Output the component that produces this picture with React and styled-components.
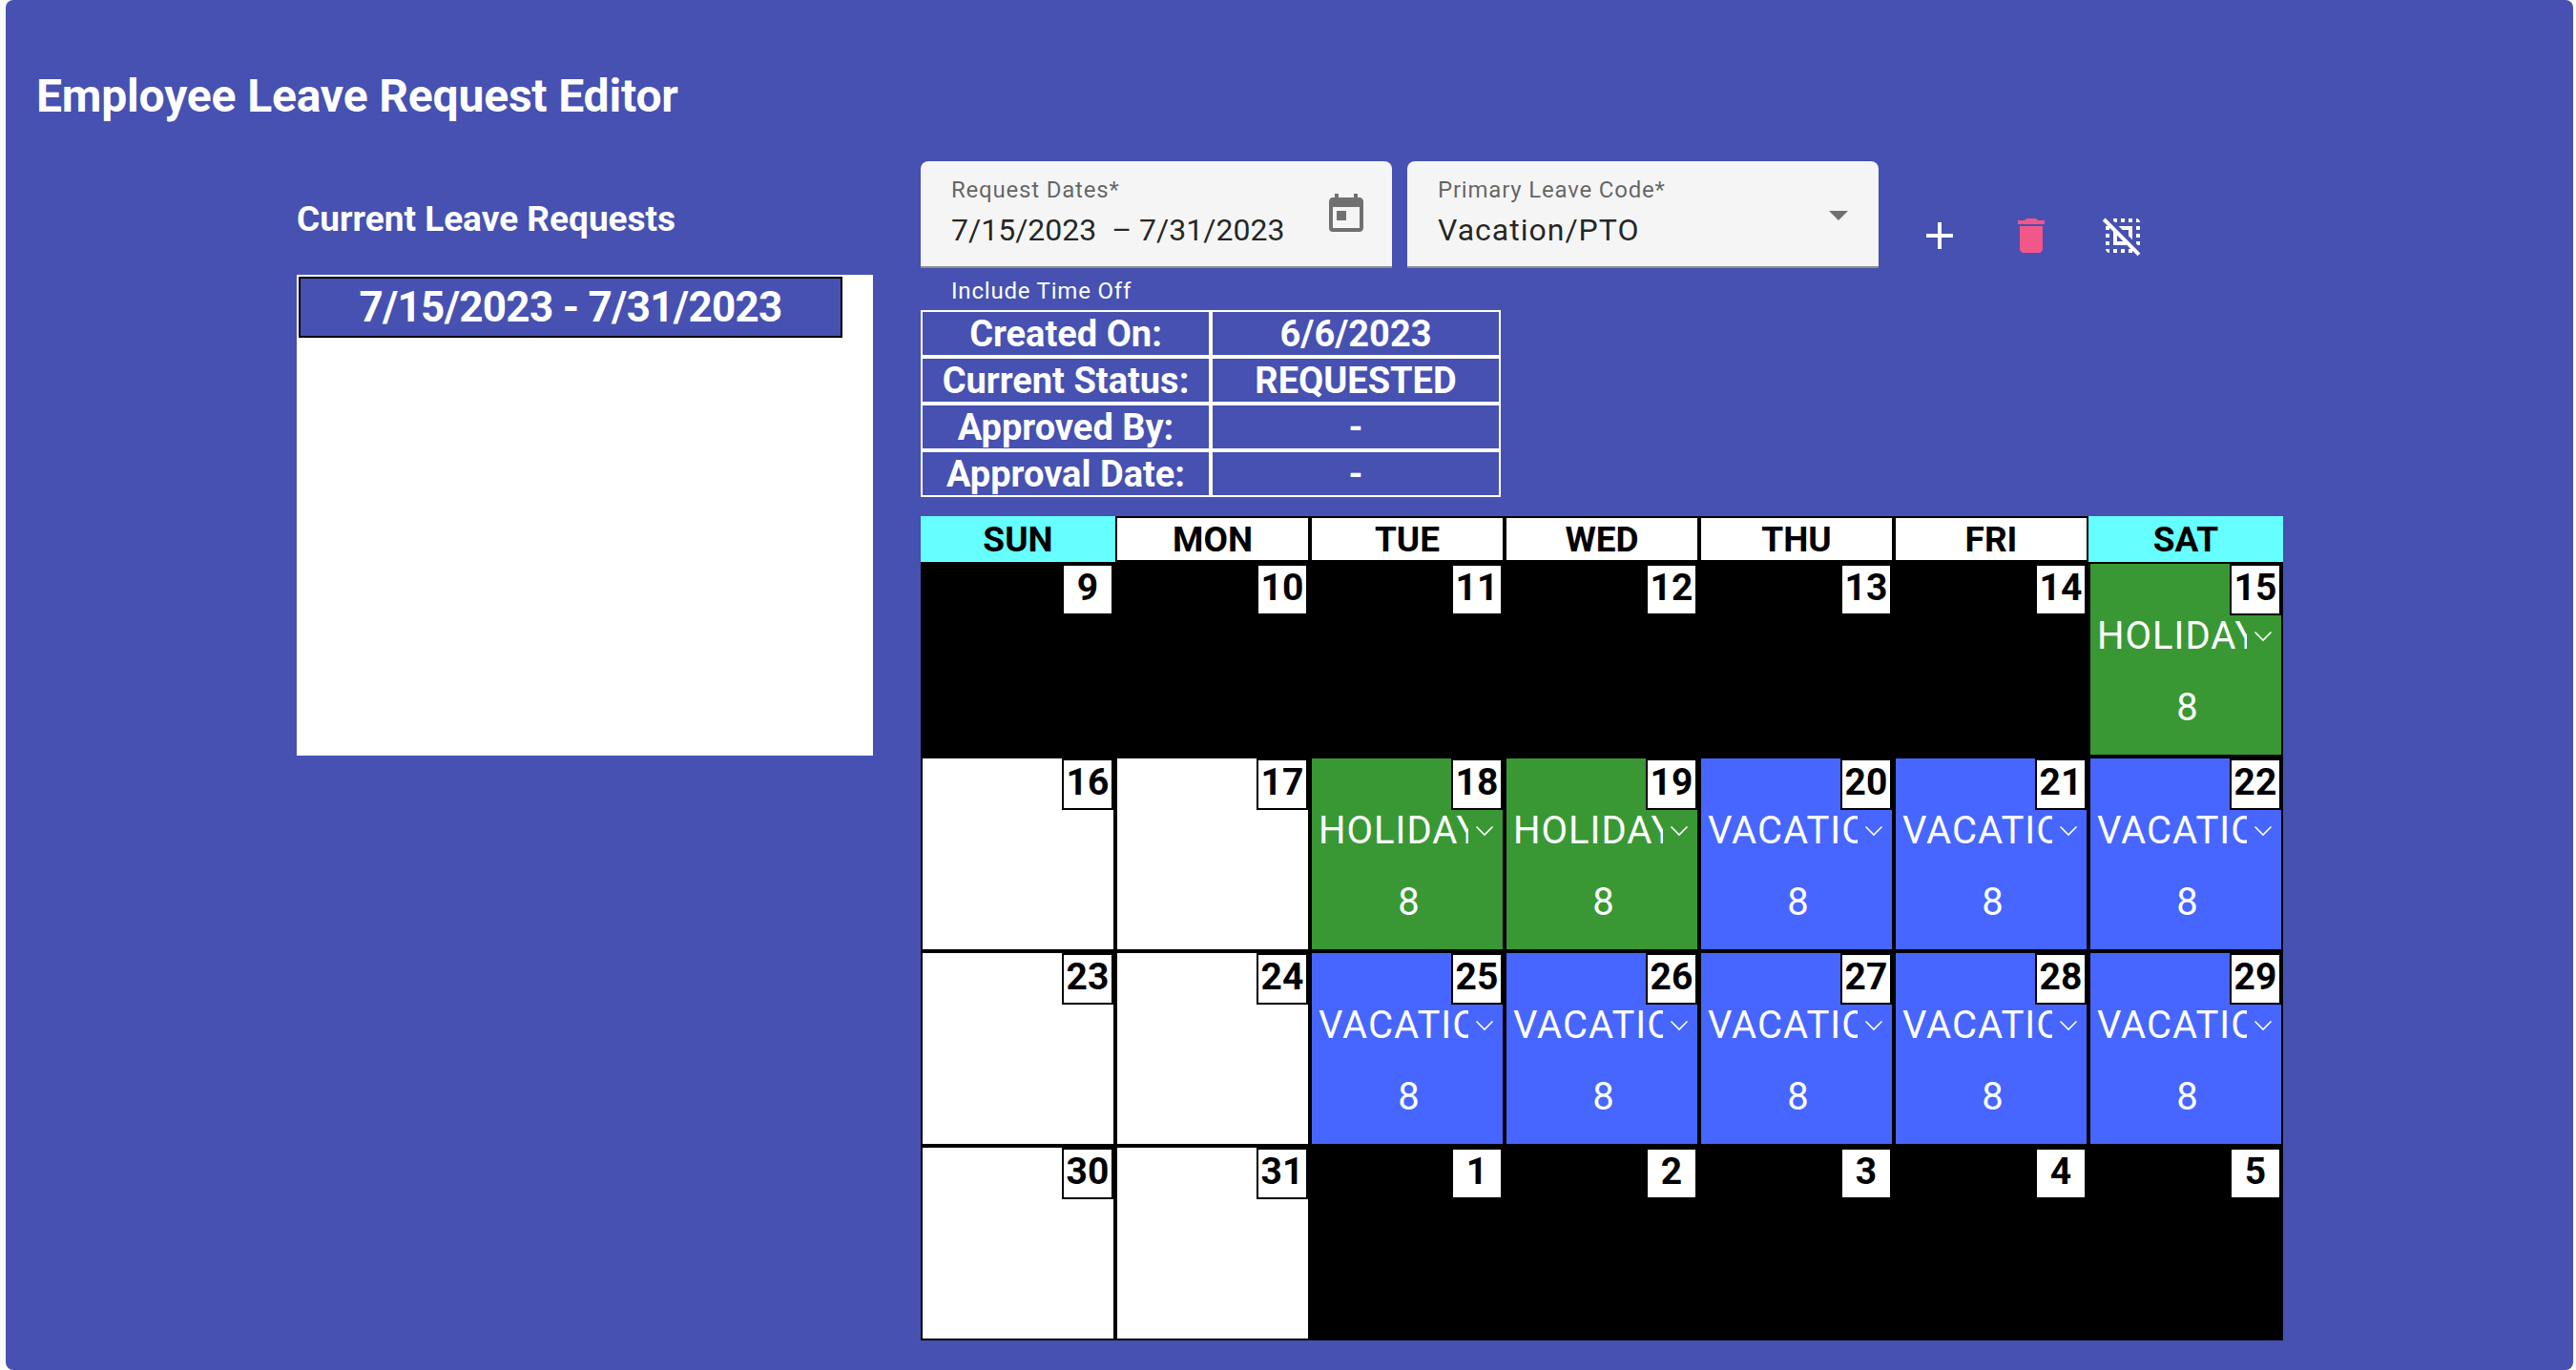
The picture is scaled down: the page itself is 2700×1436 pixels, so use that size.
import styled, { createGlobalStyle } from "styled-components";
import { MdAdd, MdArrowDropDown, MdDelete, MdDeselect, MdToday } from "react-icons/md";

const INDIGO = "#4651b1";
const CELL_COLORS = {
  off: "#000000",
  open: "#ffffff",
  holiday: "#399834",
  vacation: "#4666ff",
};

const GlobalStyle = createGlobalStyle`
  html, body {
    margin: 0;
    padding: 0;
    background: #fafafa;
  }
  body {
    font-family: Roboto, "Liberation Sans", sans-serif;
  }
`;

const Page = styled.div`
  height: 1436px;
  padding: 0 3px 0 6px;
  box-sizing: border-box;
  overflow: hidden;
`;

const Panel = styled.main`
  height: 100%;
  box-sizing: border-box;
  padding: 72px 0 0 32px;
  background: ${INDIGO};
  border-radius: 8px;
  color: #fff;
`;

const Title = styled.h1`
  margin: 0;
  font-size: 48px;
  line-height: 57px;
  font-weight: 700;
  letter-spacing: -0.17px;
`;

const Content = styled.div`
  display: flex;
  gap: 50px;
  margin-top: 40px;
  padding-left: 273px;
`;

const LeftColumn = styled.section`
  width: 604px;
  flex: none;
`;

const Subtitle = styled.h2`
  margin: 39px 0 0;
  font-size: 37px;
  line-height: 43px;
  font-weight: 700;
`;

const RequestList = styled.div`
  margin-top: 37px;
  height: 504px;
  padding: 2px;
  box-sizing: border-box;
  background: #fff;
`;

const RequestItem = styled.div`
  width: 570px;
  height: 64px;
  box-sizing: border-box;
  border: 2px solid #000;
  background: ${INDIGO};
  font-size: 44px;
  line-height: 60px;
  font-weight: 700;
  letter-spacing: -0.7px;
  text-align: center;
`;

const RightColumn = styled.section`
  width: 1428px;
  flex: none;
`;

const FormRow = styled.div`
  display: flex;
  gap: 16px;
  height: 112px;
`;

const Field = styled.div`
  position: relative;
  width: 494px;
  height: 112px;
  box-sizing: border-box;
  padding: 16px 32px 0;
  background: #f5f5f5;
  border-bottom: 2px solid #8c8c8c;
  border-radius: 8px 8px 0 0;
`;

const FieldLabel = styled.div`
  font-size: 24px;
  line-height: 28px;
  letter-spacing: 0.8px;
  color: rgba(0, 0, 0, 0.6);
`;

const FieldValue = styled.div`
  margin-top: 9px;
  font-size: 32px;
  line-height: 38px;
  letter-spacing: ${(p) => p.$spacing}px;
  color: rgba(0, 0, 0, 0.87);
  white-space: pre;
`;

const FieldIcon = styled.span`
  position: absolute;
  top: 32px;
  right: ${(p) => p.$right}px;
  display: flex;
  color: #707070;
`;

const ActionGroup = styled.div`
  display: flex;
  margin-top: 30px;
`;

const ActionButton = styled.button`
  width: 96px;
  height: 96px;
  padding: 0;
  border: 0;
  background: none;
  display: flex;
  align-items: center;
  justify-content: center;
  color: ${(p) => p.$color || "#fff"};
`;

const HelperText = styled.div`
  margin: 5px 0 0 32px;
  font-size: 24px;
  line-height: 39px;
  letter-spacing: 0.8px;
`;

const InfoTable = styled.div`
  display: grid;
  grid-template-columns: 304px 304px;
  grid-auto-rows: 49px;
  width: 608px;
`;

const InfoCell = styled.div`
  border: 2px solid #fff;
  font-size: 38px;
  line-height: 47px;
  font-weight: 700;
  text-align: center;
  white-space: nowrap;
`;

const Calendar = styled.div`
  display: grid;
  grid-template-columns: repeat(7, 204px);
  grid-template-rows: 48px repeat(4, 204px);
  margin-top: 20px;
`;

const DayHeader = styled.div`
  box-sizing: border-box;
  border: 2px solid ${(p) => (p.$weekend ? "#66ffff" : "#000")};
  background: ${(p) => (p.$weekend ? "#66ffff" : "#fff")};
  color: #000;
  font-size: 37px;
  line-height: 45px;
  font-weight: 700;
  text-align: center;
`;

const Cell = styled.div`
  display: flex;
  flex-direction: column;
  box-sizing: border-box;
  border: 2px solid #000;
  background: ${(p) => CELL_COLORS[p.$kind]};
  color: #fff;
`;

const DayNumber = styled.div`
  align-self: flex-end;
  width: 54px;
  height: 54px;
  box-sizing: border-box;
  border: 2px solid #000;
  background: #fff;
  color: #000;
  font-size: 39px;
  line-height: 46px;
  font-weight: 700;
  text-align: center;
`;

const LeaveSelect = styled.div`
  display: flex;
  align-items: center;
  padding-left: 7px;
  margin-top: -2px;
`;

const LeaveName = styled.div`
  width: 157px;
  overflow: hidden;
  font-size: 40px;
  line-height: 48px;
  letter-spacing: 1px;
  white-space: nowrap;
`;

const Chevron = styled.svg`
  width: 20px;
  height: 12px;
  margin-left: 7px;
  fill: none;
  stroke: #fff;
  stroke-width: 1.6;
`;

const Hours = styled.div`
  margin-top: 27px;
  font-size: 40px;
  line-height: 48px;
  text-align: center;
  padding-left: 3px;
`;

const WEEKDAYS = ["SUN", "MON", "TUE", "WED", "THU", "FRI", "SAT"];

const INFO_ROWS = [
  ["Created On:", "6/6/2023"],
  ["Current Status:", "REQUESTED"],
  ["Approved By:", "-"],
  ["Approval Date:", "-"],
];

const DAYS = [
  [9, "off"], [10, "off"], [11, "off"], [12, "off"], [13, "off"], [14, "off"], [15, "holiday"],
  [16, "open"], [17, "open"], [18, "holiday"], [19, "holiday"], [20, "vacation"], [21, "vacation"], [22, "vacation"],
  [23, "open"], [24, "open"], [25, "vacation"], [26, "vacation"], [27, "vacation"], [28, "vacation"], [29, "vacation"],
  [30, "open"], [31, "open"], [1, "off"], [2, "off"], [3, "off"], [4, "off"], [5, "off"],
];

const LEAVE_NAMES = { holiday: "HOLIDAY", vacation: "VACATION" };

const DayCell = ({ day, kind }) => (
  <Cell $kind={kind}>
    <DayNumber>{day}</DayNumber>
    {LEAVE_NAMES[kind] && (
      <>
        <LeaveSelect>
          <LeaveName>{LEAVE_NAMES[kind]}</LeaveName>
          <Chevron viewBox="0 0 20 12">
            <path d="M1.5 1.5 10 10l8.5-8.5" />
          </Chevron>
        </LeaveSelect>
        <Hours>8</Hours>
      </>
    )}
  </Cell>
);

const App = () => (
  <Page>
    <GlobalStyle />
    <Panel>
      <Title>Employee Leave Request Editor</Title>
      <Content>
        <LeftColumn>
          <Subtitle>Current Leave Requests</Subtitle>
          <RequestList>
            <RequestItem>7/15/2023 - 7/31/2023</RequestItem>
          </RequestList>
        </LeftColumn>
        <RightColumn>
          <FormRow>
            <Field>
              <FieldLabel>Request Dates*</FieldLabel>
              <FieldValue $spacing={0}>7/15/2023  – 7/31/2023</FieldValue>
              <FieldIcon $right={24}>
                <MdToday size={48} />
              </FieldIcon>
            </Field>
            <Field>
              <FieldLabel>Primary Leave Code*</FieldLabel>
              <FieldValue $spacing={1}>Vacation/PTO</FieldValue>
              <FieldIcon $right={18}>
                <MdArrowDropDown size={48} />
              </FieldIcon>
            </Field>
            <ActionGroup>
              <ActionButton>
                <MdAdd size={48} />
              </ActionButton>
              <ActionButton $color="#f2578a">
                <MdDelete size={48} />
              </ActionButton>
              <ActionButton>
                <MdDeselect size={48} />
              </ActionButton>
            </ActionGroup>
          </FormRow>
          <HelperText>Include Time Off</HelperText>
          <InfoTable>
            {INFO_ROWS.flat().map((text, i) => (
              <InfoCell key={i}>{text}</InfoCell>
            ))}
          </InfoTable>
          <Calendar>
            {WEEKDAYS.map((name) => (
              <DayHeader key={name} $weekend={name === "SUN" || name === "SAT"}>
                {name}
              </DayHeader>
            ))}
            {DAYS.map(([day, kind]) => (
              <DayCell key={`${day}-${kind}`} day={day} kind={kind} />
            ))}
          </Calendar>
        </RightColumn>
      </Content>
    </Panel>
  </Page>
);

export default App;
